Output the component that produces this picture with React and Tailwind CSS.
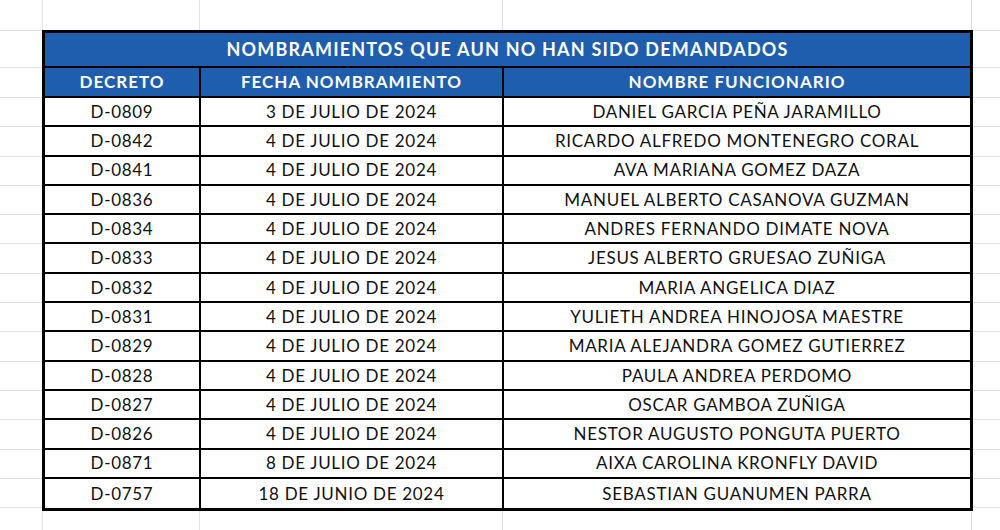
const rows = [
  ["D-0809", "3 DE JULIO DE 2024", "DANIEL GARCIA PEÑA JARAMILLO"],
  ["D-0842", "4 DE JULIO DE 2024", "RICARDO ALFREDO MONTENEGRO CORAL"],
  ["D-0841", "4 DE JULIO DE 2024", "AVA MARIANA GOMEZ DAZA"],
  ["D-0836", "4 DE JULIO DE 2024", "MANUEL ALBERTO CASANOVA GUZMAN"],
  ["D-0834", "4 DE JULIO DE 2024", "ANDRES FERNANDO DIMATE NOVA"],
  ["D-0833", "4 DE JULIO DE 2024", "JESUS ALBERTO GRUESAO ZUÑIGA"],
  ["D-0832", "4 DE JULIO DE 2024", "MARIA ANGELICA DIAZ"],
  ["D-0831", "4 DE JULIO DE 2024", "YULIETH ANDREA HINOJOSA MAESTRE"],
  ["D-0829", "4 DE JULIO DE 2024", "MARIA ALEJANDRA GOMEZ GUTIERREZ"],
  ["D-0828", "4 DE JULIO DE 2024", "PAULA ANDREA PERDOMO"],
  ["D-0827", "4 DE JULIO DE 2024", "OSCAR GAMBOA ZUÑIGA"],
  ["D-0826", "4 DE JULIO DE 2024", "NESTOR AUGUSTO PONGUTA PUERTO"],
  ["D-0871", "8 DE JULIO DE 2024", "AIXA CAROLINA KRONFLY DAVID"],
  ["D-0757", "18 DE JUNIO DE 2024", "SEBASTIAN GUANUMEN PARRA"],
];

function MarginColumn({ className }) {
  return (
    <div className={`flex flex-col border-t border-[#e2e2e2] ${className}`}>
      <div className="h-[37px] border-b border-[#e2e2e2]" />
      <div className="h-[30px] border-b border-[#e2e2e2]" />
      {rows.map((r) => (
        <div key={r[0]} className="h-[29.3px] border-b border-[#e2e2e2]" />
      ))}
    </div>
  );
}

function SpacerRow({ className }) {
  return (
    <div className={`flex ${className}`}>
      <div className="w-[43px] border-r border-[#e2e2e2]" />
      <div className="w-[157px] border-r border-[#e2e2e2]" />
      <div className="w-[303px] border-r border-[#e2e2e2]" />
      <div className="w-[469px] border-r border-[#e2e2e2]" />
    </div>
  );
}

export default function App() {
  return (
    <div
      className="flex h-[530px] w-[1000px] flex-col overflow-hidden bg-white"
      style={{ fontFamily: "Lato, 'Open Sans', sans-serif" }}
    >
      <SpacerRow className="h-[30px]" />

      <div className="flex">
        <MarginColumn className="w-[42px]" />

        <div className="w-[931px] border-[3px] border-black">
          <div className="flex h-[35px] items-center justify-center border-b-2 border-black bg-[#1f5eae] text-[18px] font-bold tracking-[1.2px] text-white">
            NOMBRAMIENTOS QUE AUN NO HAN SIDO DEMANDADOS
          </div>
          <div className="flex h-[30px] border-b-2 border-black bg-[#1f5eae] text-[17px] font-bold tracking-[1px] text-white">
            <div className="flex w-[156px] items-center justify-center border-r-2 border-black">
              DECRETO
            </div>
            <div className="flex w-[303px] items-center justify-center border-r-2 border-black">
              FECHA NOMBRAMIENTO
            </div>
            <div className="flex flex-1 items-center justify-center">
              NOMBRE FUNCIONARIO
            </div>
          </div>
          {rows.map((r, i) => (
            <div
              key={r[0]}
              className={`flex h-[29.3px] text-[17px] tracking-[0.7px] text-[#111] ${
                i < rows.length - 1 ? "border-b-2 border-black" : ""
              }`}
            >
              <div className="flex w-[156px] items-center justify-center border-r-2 border-black">
                {r[0]}
              </div>
              <div className="flex w-[303px] items-center justify-center border-r-2 border-black">
                {r[1]}
              </div>
              <div className="flex flex-1 items-center justify-center">{r[2]}</div>
            </div>
          ))}
        </div>

        <MarginColumn className="flex-1" />
      </div>

      <SpacerRow className="flex-1" />
    </div>
  );
}
